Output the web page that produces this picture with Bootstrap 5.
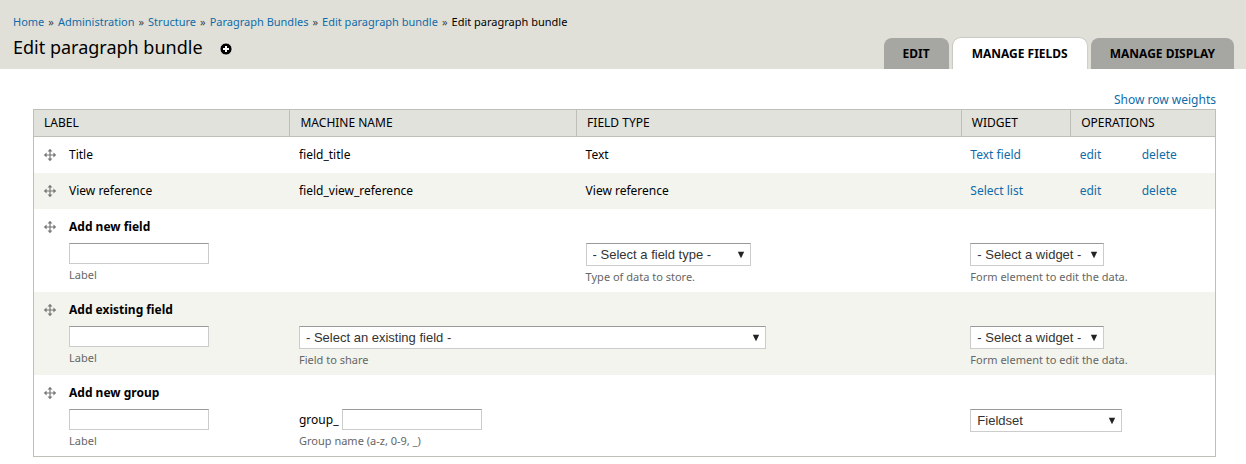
<!DOCTYPE html>
<html lang="en">
<head>
<meta charset="utf-8">
<meta name="viewport" content="width=device-width, initial-scale=1">
<title>Edit paragraph bundle</title>
<link href="https://cdn.jsdelivr.net/npm/bootstrap@5.3.0/dist/css/bootstrap.min.css" rel="stylesheet">
<style>
  body { font-family: "Noto Sans", "Open Sans", sans-serif; font-size: 12px; line-height: 18px; color: #000; background: #fff; }
  a { color: #0f6ca8; text-decoration: none; }
  a:hover { text-decoration: underline; }

  .branding { background: #e0e0d8; padding: 13px 12px 0 13px; }
  .title-block { padding-bottom: 10px; }
  .crumbs { --bs-breadcrumb-divider: "»"; --bs-breadcrumb-font-size: 11px; --bs-breadcrumb-item-padding-x: 4px; --bs-breadcrumb-divider-color: #444; }
  .crumbs .breadcrumb-item.active { color: #000; }
  .page-title { font-size: 18px; line-height: 24px; font-weight: 400; }

  .page-tabs { border: 0; gap: 4px; }
  .page-tabs .nav-link { background: #a6a7a2; color: #000; font-weight: 700; line-height: 18px; padding: 7px 19px 6px; border: 0; margin: 0; border-radius: 8px 8px 0 0; text-transform: uppercase; }
  .page-tabs .nav-link.active { background: #fff; color: #000; box-shadow: 0 0 0 1px #c9cac3; clip-path: inset(-1px -1px 0 -1px); }

  .main-area { padding: 22px 30px 0 33px; }

  .field-table { --bs-table-bg: transparent; --bs-table-color: #000; table-layout: fixed; border: 1px solid #bebfb9; }
  .field-table > thead th { background: #e1e2dc; font-weight: 400; text-transform: uppercase; padding: 4px 10px; border: 0; border-bottom: 1px solid #bebfb9; border-left: 1px solid #bebfb9; }
  .field-table > thead th:first-child { border-left: 0; }
  .field-table > tbody > tr > td { padding: 9px; border: 0; }
  .field-table > tbody > tr:nth-child(even) > td { background: #f3f4ee; }
  .field-table > tbody > tr.form-row-cells > td { padding: 9px 9px 8px; }
  .field-table > tbody > tr.form-row-cells > td + td { padding-top: 34px; }
  .field-table .col-label { width: 21.7%; }
  .field-table .col-machine { width: 24.25%; }
  .field-table .col-type { width: 32.55%; }
  .field-table .col-widget { width: 9.25%; }
  .field-table .col-edit { width: 5.25%; }

  .drag { flex: none; width: 14px; height: 14px; padding: 0; border: 0; background: none; margin: 2px 12px 0 0; cursor: move; }
  .drag svg { display: block; }
  .row-heading { font-weight: 700; margin-bottom: 7px; }

  .field-table .form-control, .field-table .form-select { font: 13px/17px "Liberation Sans", Arial, sans-serif; color: #333; background-color: #fff; border: 1px solid #ccc; border-top-color: #999; border-radius: 0; }
  .field-table .form-control { width: 140px; height: 21px; min-height: 0; padding: 1px 3px; }
  .field-table .form-select { width: auto; height: 23px; padding: 2px 16px 2px 6px; background-image: url("data:image/svg+xml,%3Csvg xmlns='http://www.w3.org/2000/svg' width='8' height='8' viewBox='0 0 8 8'%3E%3Cpath d='M.8.8h6.4L4 7.2z' fill='%23222'/%3E%3C/svg%3E"); background-size: 8px 8px; background-position: right 5px center; }
  .field-table .select-type { width: 165px; }
  .field-table .select-widget { width: 134px; }
  .field-table .select-existing { width: 467px; }
  .field-table .select-group { width: 152px; }
  .hint { display: block; font-size: 11px; line-height: 14px; color: #666; margin-top: 4px; white-space: nowrap; }
</style>
</head>
<body>

<svg class="d-none" aria-hidden="true">
  <symbol id="move" viewBox="0 0 14 14">
    <path d="M7 2v10M2 7h10" stroke="#777" stroke-width="1.2" fill="none"/>
    <path d="M7 .8 9.4 3.6H4.600zM7 13.200 9.400 10.400H4.600zM.8 7 3.600 4.600v4.800zM13.200 7 10.400 4.600v4.800z" fill="#777"/>
  </symbol>
</svg>

<header class="branding d-flex flex-wrap justify-content-between align-items-end">
  <div class="title-block">
    <nav aria-label="Breadcrumb">
      <ol class="breadcrumb crumbs mb-0">
        <li class="breadcrumb-item"><a href="#">Home</a></li>
        <li class="breadcrumb-item"><a href="#">Administration</a></li>
        <li class="breadcrumb-item"><a href="#">Structure</a></li>
        <li class="breadcrumb-item"><a href="#">Paragraph Bundles</a></li>
        <li class="breadcrumb-item"><a href="#">Edit paragraph bundle</a></li>
        <li class="breadcrumb-item active" aria-current="page">Edit paragraph bundle</li>
      </ol>
    </nav>
    <div class="d-flex align-items-center pt-1">
      <h1 class="page-title mb-0">Edit paragraph bundle</h1>
      <a href="#" class="ms-3 pt-1 d-flex" aria-label="Add to shortcuts">
        <svg width="14" height="14" viewBox="0 0 14 14"><circle cx="7" cy="7" r="6" fill="#000" stroke="#fff" stroke-opacity=".7"/><path d="M7 4v6M4 7h6" stroke="#fff" stroke-width="2"/></svg>
      </a>
    </div>
  </div>
  <ul class="nav nav-tabs page-tabs">
    <li class="nav-item"><a class="nav-link" href="#">Edit</a></li>
    <li class="nav-item"><a class="nav-link active" aria-current="page" href="#">Manage fields</a></li>
    <li class="nav-item"><a class="nav-link" href="#">Manage display</a></li>
  </ul>
</header>

<main class="main-area">
  <div class="text-end"><a href="#">Show row weights</a></div>
  <table class="table field-table mb-0 align-top">
    <colgroup>
      <col class="col-label"><col class="col-machine"><col class="col-type"><col class="col-widget"><col class="col-edit"><col>
    </colgroup>
    <thead>
      <tr>
        <th scope="col">Label</th>
        <th scope="col">Machine name</th>
        <th scope="col">Field type</th>
        <th scope="col">Widget</th>
        <th scope="col" colspan="2">Operations</th>
      </tr>
    </thead>
    <tbody>
      <tr>
        <td><div class="d-flex"><button type="button" class="drag" aria-label="Move Title"><svg width="14" height="14"><use href="#move"/></svg></button>Title</div></td>
        <td>field_title</td>
        <td>Text</td>
        <td><a href="#">Text field</a></td>
        <td><a href="#">edit</a></td>
        <td><a href="#">delete</a></td>
      </tr>
      <tr>
        <td><div class="d-flex"><button type="button" class="drag" aria-label="Move View reference"><svg width="14" height="14"><use href="#move"/></svg></button>View reference</div></td>
        <td>field_view_reference</td>
        <td>View reference</td>
        <td><a href="#">Select list</a></td>
        <td><a href="#">edit</a></td>
        <td><a href="#">delete</a></td>
      </tr>
      <tr class="form-row-cells">
        <td>
          <div class="d-flex">
            <button type="button" class="drag" aria-label="Move new field"><svg width="14" height="14"><use href="#move"/></svg></button>
            <div>
              <div class="row-heading">Add new field</div>
              <input type="text" class="form-control" id="new-label">
              <label class="hint" for="new-label">Label</label>
            </div>
          </div>
        </td>
        <td></td>
        <td>
          <select class="form-select select-type" id="new-type"><option>- Select a field type -</option></select>
          <label class="hint" for="new-type">Type of data to store.</label>
        </td>
        <td colspan="3">
          <select class="form-select select-widget" id="new-widget"><option>- Select a widget -</option></select>
          <label class="hint" for="new-widget">Form element to edit the data.</label>
        </td>
      </tr>
      <tr class="form-row-cells">
        <td>
          <div class="d-flex">
            <button type="button" class="drag" aria-label="Move existing field"><svg width="14" height="14"><use href="#move"/></svg></button>
            <div>
              <div class="row-heading">Add existing field</div>
              <input type="text" class="form-control" id="existing-label">
              <label class="hint" for="existing-label">Label</label>
            </div>
          </div>
        </td>
        <td colspan="2">
          <select class="form-select select-existing" id="existing-field"><option>- Select an existing field -</option></select>
          <label class="hint" for="existing-field">Field to share</label>
        </td>
        <td colspan="3">
          <select class="form-select select-widget" id="existing-widget"><option>- Select a widget -</option></select>
          <label class="hint" for="existing-widget">Form element to edit the data.</label>
        </td>
      </tr>
      <tr class="form-row-cells">
        <td>
          <div class="d-flex">
            <button type="button" class="drag" aria-label="Move new group"><svg width="14" height="14"><use href="#move"/></svg></button>
            <div>
              <div class="row-heading">Add new group</div>
              <input type="text" class="form-control" id="group-label">
              <label class="hint" for="group-label">Label</label>
            </div>
          </div>
        </td>
        <td>
          <div class="d-flex align-items-center gap-1">
            <span>group_</span><input type="text" class="form-control" id="group-name">
          </div>
          <label class="hint" for="group-name">Group name (a-z, 0-9, _)</label>
        </td>
        <td></td>
        <td colspan="3">
          <select class="form-select select-group" aria-label="Group widget"><option>Fieldset</option></select>
        </td>
      </tr>
    </tbody>
  </table>
</main>

<script src="https://cdn.jsdelivr.net/npm/bootstrap@5.3.0/dist/js/bootstrap.bundle.min.js"></script>
</body>
</html>
